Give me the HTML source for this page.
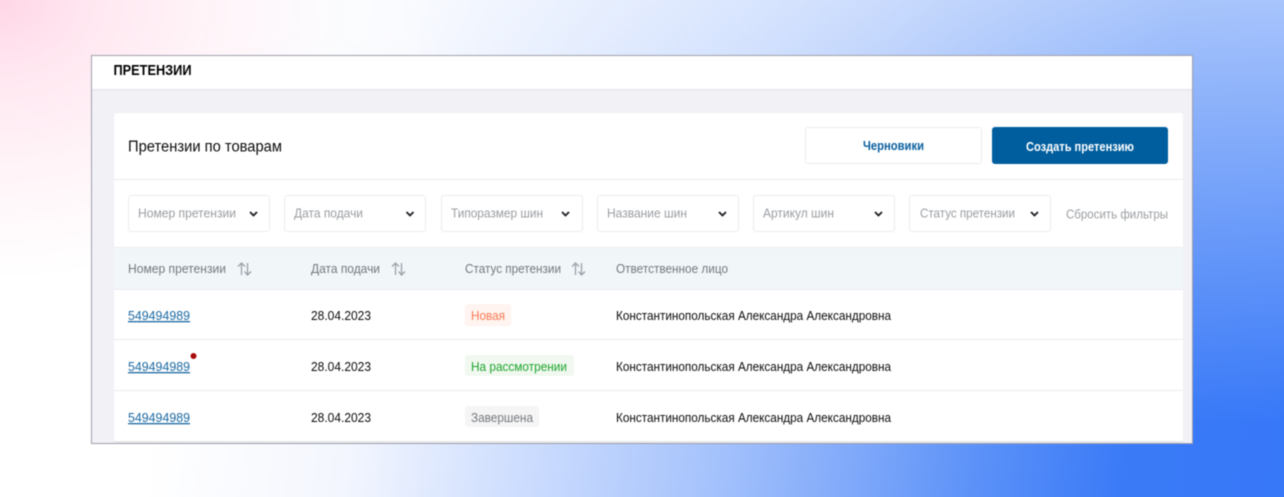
<!DOCTYPE html>
<html lang="ru">
<head>
<meta charset="utf-8">
<title>Претензии</title>
<style>
html,body{margin:0;padding:0;width:1284px;height:497px;overflow:hidden}
body{position:relative;background:
 radial-gradient(ellipse 345px 280px at 0 0,#ffd6e6 0,rgba(255,214,230,.6) 25%,rgba(255,214,230,.27) 60%,rgba(255,214,230,0) 100%),
 linear-gradient(to bottom,rgba(255,255,255,.56) 0,rgba(255,255,255,.28) 42%,rgba(255,255,255,0) 85%),
 linear-gradient(97deg,#fff 0,#fff 15%,#f3f6fe 30%,#d0dffe 42%,#a9c5fc 56%,#86adfa 66%,#5b91f8 77%,#3a7af7 88%,#3778f8 100%);}
.a{position:absolute;box-sizing:border-box}
#frame{left:91px;top:55px;width:1102px;height:389px;background:#f1f1f6;border:1px solid #a0a0ac;overflow:hidden}
#wrap{left:0;top:0;width:1284px;height:497px;filter:blur(.4px)}
.sel{top:195px;height:37px;width:142px;background:#fff;border:1px solid #ececf0;border-radius:3px}
.badge{border-radius:3px}
.line{left:114px;width:1069px;height:1px;background:#ececf0}
svg{position:absolute;left:0;top:0}
text{font-family:"Liberation Sans",sans-serif;font-size:13px}
.ph{fill:#9a9ea2}
.hd{fill:#74797e}
.tx{fill:#0c0c0c}
.lk{fill:#1a68a2;text-decoration:underline}
</style>
</head>
<body>
<div class="a" id="wrap">
 <div class="a" id="frame"></div>
 <!-- page header -->
 <div class="a" style="left:92px;top:56px;width:1100px;height:33px;background:#fff"></div>
 <div class="a" style="left:92px;top:89px;width:1100px;height:2px;background:#e9e9ee"></div>
 <!-- card -->
 <div class="a" style="left:114px;top:113px;width:1069px;height:329px;background:#fff;border-radius:3px 3px 0 0"></div>
 <div class="a line" style="top:179px"></div>
 <div class="a" style="left:805px;top:127px;width:177px;height:37px;background:#fff;border:1px solid #ececf0;border-radius:3px"></div>
 <div class="a" style="left:992px;top:127px;width:176px;height:37px;background:#005e9e;border-radius:3px"></div>
 <div class="a sel" style="left:128px"></div>
 <div class="a sel" style="left:284px"></div>
 <div class="a sel" style="left:441px"></div>
 <div class="a sel" style="left:597px"></div>
 <div class="a sel" style="left:753px"></div>
 <div class="a sel" style="left:909px"></div>
 <div class="a" style="left:114px;top:247px;width:1069px;height:43px;background:#f1f6f9;border-top:1px solid #ececf0;border-bottom:1px solid #ececf0"></div>
 <div class="a line" style="top:339px"></div>
 <div class="a line" style="top:390px"></div>
 <div class="a" style="left:114px;top:441px;width:1069px;height:2px;background:#e6e8ea"></div>
 <div class="a badge" style="left:465px;top:304px;width:46px;height:22px;background:#fff4f0"></div>
 <div class="a badge" style="left:465px;top:355px;width:109px;height:21px;background:#f0f8f0"></div>
 <div class="a badge" style="left:465px;top:406px;width:74px;height:21px;background:#f5f5f5"></div>

 <svg width="1284" height="497" viewBox="0 0 1284 497" xmlns="http://www.w3.org/2000/svg">
  <text x="113.5" y="75" textLength="78" lengthAdjust="spacingAndGlyphs" style="font-size:14.500px;font-weight:700" fill="#000">ПРЕТЕНЗИИ</text>
  <text x="128" y="151.500" textLength="154" lengthAdjust="spacingAndGlyphs" style="font-size:15.500px" fill="#0c0c0c">Претензии по товарам</text>
  <text x="863" y="150" textLength="61" lengthAdjust="spacingAndGlyphs" style="font-size:12.500px;font-weight:700" fill="#0a5f9f">Черновики</text>
  <text x="1026" y="151" textLength="108" lengthAdjust="spacingAndGlyphs" style="font-size:12.500px;font-weight:700" fill="#fff">Создать претензию</text>

  <text class="ph" x="138" y="217.500" textLength="98" lengthAdjust="spacingAndGlyphs">Номер претензии</text>
  <text class="ph" x="294" y="217.500" textLength="69" lengthAdjust="spacingAndGlyphs">Дата подачи</text>
  <text class="ph" x="451" y="217.500" textLength="92" lengthAdjust="spacingAndGlyphs">Типоразмер шин</text>
  <text class="ph" x="607" y="217.500" textLength="80" lengthAdjust="spacingAndGlyphs">Название шин</text>
  <text class="ph" x="763" y="217.500" textLength="71" lengthAdjust="spacingAndGlyphs">Артикул шин</text>
  <text class="ph" x="920" y="217.500" textLength="95" lengthAdjust="spacingAndGlyphs">Статус претензии</text>
  <text class="ph" x="1066" y="218.500" textLength="102" lengthAdjust="spacingAndGlyphs">Сбросить фильтры</text>

  <g fill="none" stroke="#1c1c22" stroke-width="1.800">
   <path d="M250 212l3.500 3.500 3.500-3.500"/>
   <path d="M406.500 212l3.500 3.500 3.500-3.500"/>
   <path d="M562 212l3.500 3.500 3.500-3.500"/>
   <path d="M719 212l3.500 3.500 3.500-3.500"/>
   <path d="M875 212l3.500 3.500 3.500-3.500"/>
   <path d="M1031 212l3.500 3.500 3.500-3.500"/>
  </g>

  <text class="hd" x="128" y="273" textLength="98" lengthAdjust="spacingAndGlyphs">Номер претензии</text>
  <text class="hd" x="311" y="273" textLength="69" lengthAdjust="spacingAndGlyphs">Дата подачи</text>
  <text class="hd" x="465" y="273" textLength="96" lengthAdjust="spacingAndGlyphs">Статус претензии</text>
  <text class="hd" x="616" y="273" textLength="112" lengthAdjust="spacingAndGlyphs">Ответственное лицо</text>

  <g fill="none" stroke="#9aa1a7" stroke-width="1.300">
   <path d="M241.500 275v-12M238 266.500l3.500-3.500 3.500 3.500M247.500 263v12M244.500 271.500l3 3.500 3.500-3.500"/>
   <path d="M395.500 275v-12M392 266.500l3.500-3.500 3.500 3.500M401.500 263v12M398.500 271.500l3 3.500 3.500-3.500"/>
   <path d="M575.500 275v-12M572 266.500l3.500-3.500 3.500 3.500M581.500 263v12M578.500 271.500l3 3.500 3.500-3.500"/>
  </g>

  <text class="lk" x="128" y="320" textLength="62" lengthAdjust="spacingAndGlyphs">549494989</text>
  <text class="lk" x="128" y="371" textLength="62" lengthAdjust="spacingAndGlyphs">549494989</text>
  <text class="lk" x="128" y="422" textLength="62" lengthAdjust="spacingAndGlyphs">549494989</text>
  <circle cx="193.500" cy="356" r="3" fill="#a80c0c"/>

  <text class="tx" x="311" y="320" textLength="60" lengthAdjust="spacingAndGlyphs">28.04.2023</text>
  <text class="tx" x="311" y="371" textLength="60" lengthAdjust="spacingAndGlyphs">28.04.2023</text>
  <text class="tx" x="311" y="422" textLength="60" lengthAdjust="spacingAndGlyphs">28.04.2023</text>

  <text x="471" y="320" textLength="34" lengthAdjust="spacingAndGlyphs" fill="#fb7a55">Новая</text>
  <text x="471" y="371" textLength="96" lengthAdjust="spacingAndGlyphs" fill="#1fa52c">На рассмотрении</text>
  <text x="471" y="422" textLength="62" lengthAdjust="spacingAndGlyphs" fill="#74797e">Завершена</text>

  <text class="tx" x="616" y="320" textLength="275" lengthAdjust="spacingAndGlyphs">Константинопольская Александра Александровна</text>
  <text class="tx" x="616" y="371" textLength="275" lengthAdjust="spacingAndGlyphs">Константинопольская Александра Александровна</text>
  <text class="tx" x="616" y="422" textLength="275" lengthAdjust="spacingAndGlyphs">Константинопольская Александра Александровна</text>
 </svg>
</div>
</body>
</html>
